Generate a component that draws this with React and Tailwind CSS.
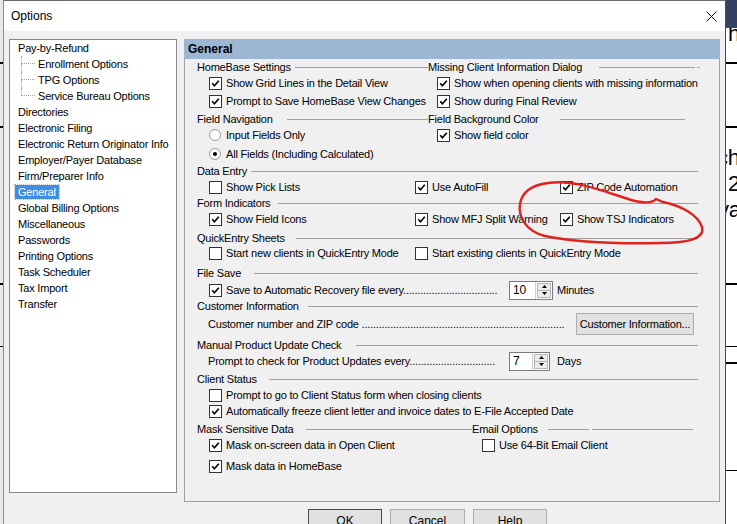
import React from 'react';

const Check = ({ on }) => (
  <span className="flex h-[13px] w-[13px] shrink-0 items-center justify-center border border-[#333] bg-white">
    {on && (
      <svg width="9" height="9" viewBox="0 0 9 9">
        <path d="M1.2 4.3 L3.4 6.7 L7.8 1.8" fill="none" stroke="#000" strokeWidth="1.7" />
      </svg>
    )}
  </span>
);

const CheckItem = ({ on, children }) => (
  <div className="flex items-center gap-[4px] whitespace-nowrap">
    <Check on={on} />
    <span>{children}</span>
  </div>
);

const Radio = ({ on, children }) => (
  <div className="flex items-center gap-[5px] whitespace-nowrap">
    <span className="flex h-[12px] w-[12px] shrink-0 items-center justify-center rounded-full border border-[#9a9a9a] bg-white">
      {on && <span className="h-[4px] w-[4px] rounded-full bg-black" />}
    </span>
    <span>{children}</span>
  </div>
);

const Rule = ({ className = '' }) => <div className={`h-px bg-[#a0a0a0] ${className}`} />;

const Row = ({ className = '', children }) => (
  <div className={`flex h-[14px] shrink-0 items-center whitespace-nowrap ${className}`}>{children}</div>
);

const Spin = ({ value, w }) => (
  <div className={`flex h-[19px] shrink-0 border border-[#7a7a7a] bg-white ${w}`}>
    <span className="flex-1 pl-[3px] text-[12px] leading-[17px]">{value}</span>
    <div className="flex w-[17px] flex-col border-l border-[#d0d0d0] p-px">
      <div className="flex flex-1 items-center justify-center border border-[#b5b5b5] bg-[#ececec]">
        <svg width="5" height="3" viewBox="0 0 5 3"><path d="M2.5 0 L5 3 L0 3Z" fill="#000" /></svg>
      </div>
      <div className="flex flex-1 items-center justify-center border border-t-0 border-[#b5b5b5] bg-[#ececec]">
        <svg width="5" height="3" viewBox="0 0 5 3"><path d="M0 0 L5 0 L2.5 3Z" fill="#000" /></svg>
      </div>
    </div>
  </div>
);

// label followed by a run of leader dots, in a box of fixed width
const Dotted = ({ text, dots, w }) => (
  <span className={`block shrink-0 whitespace-nowrap ${w}`}>
    {text}
    {'.'.repeat(dots)}
  </span>
);

const treeTop = [
  'Directories',
  'Electronic Filing',
  'Electronic Return Originator Info',
  'Employer/Payer Database',
  'Firm/Preparer Info',
  'General',
  'Global Billing Options',
  'Miscellaneous',
  'Passwords',
  'Printing Options',
  'Task Scheduler',
  'Tax Import',
  'Transfer',
];

const children = ['Enrollment Options', 'TPG Options', 'Service Bureau Options'];

const Tree = () => (
  <div className="h-[454px] w-[168px] shrink-0 border border-[#828790] bg-white">
    <div className="flex h-[16px] items-center pl-[5px]">
      <span className="px-[3px]">Pay-by-Refund</span>
    </div>
    {children.map((c, i) => (
      <div key={c} className="flex h-[16px] items-center pl-[11px]">
        <div className="flex h-[16px] w-[14px] flex-col">
          <div className="h-[8px] border-b border-l border-dotted border-[#a0a0a0]" />
          <div className={`h-[8px] ${i < children.length - 1 ? 'border-l border-dotted border-[#a0a0a0]' : ''}`} />
        </div>
        <span className="px-[3px]">{c}</span>
      </div>
    ))}
    {treeTop.map((t) => (
      <div key={t} className="flex h-[16px] items-center pl-[5px]">
        {t === 'General' ? (
          <span className="bg-[#3d8ee5] px-[3px] leading-[14px] text-white outline-1 outline-dotted outline-[#9cc3ef]">{t}</span>
        ) : (
          <span className="px-[3px]">{t}</span>
        )}
      </div>
    ))}
  </div>
);

const Panel = () => (
  <div className="flex h-[463px] w-[536px] shrink-0 flex-col">
    <div className="flex h-[20px] shrink-0 items-center bg-[#9db6d3] pl-[4px] text-[12px] font-bold tracking-normal">
      General
    </div>
    <div className="flex flex-1 flex-col border border-t-0 border-[#a0a0a0] pl-[12px]">
      {/* HomeBase / Missing client */}
      <Row className="mt-[1px]">
        <div className="flex w-[231px] items-center">
          <span className="w-[98px]">HomeBase Settings</span>
          <Rule className="flex-1" />
        </div>
        <span className="w-[171px]">Missing Client Information Dialog</span>
        <Rule className="w-[96px]" />
        <Rule className="ml-[2px] w-[3px]" />
      </Row>
      <Row className="mt-[2px] pl-[12px]">
        <div className="w-[228px]"><CheckItem on>Show Grid Lines in the Detail View</CheckItem></div>
        <CheckItem on>Show when opening clients with missing information</CheckItem>
      </Row>
      <Row className="mt-[4px] pl-[12px]">
        <div className="w-[228px]"><CheckItem on>Prompt to Save HomeBase View Changes</CheckItem></div>
        <CheckItem on>Show during Final Review</CheckItem>
      </Row>

      {/* Field navigation / background */}
      <Row className="mt-[4px]">
        <div className="flex w-[231px] items-center">
          <span className="w-[90px]">Field Navigation</span>
          <Rule className="flex-1" />
        </div>
        <span className="w-[132px]">Field Background Color</span>
        <Rule className="w-[125px]" />
      </Row>
      <Row className="mt-[2px] pl-[12px]">
        <div className="w-[228px]"><Radio>Input Fields Only</Radio></div>
        <CheckItem on>Show field color</CheckItem>
      </Row>
      <Row className="mt-[5px] pl-[12px]">
        <Radio on>All Fields (Including Calculated)</Radio>
      </Row>

      {/* Data entry */}
      <Row className="mr-[21px] mt-[3px]">
        <span className="w-[54px]">Data Entry</span>
        <Rule className="flex-1" />
      </Row>
      <Row className="mt-[2px] pl-[12px]">
        <div className="w-[206px]"><CheckItem>Show Pick Lists</CheckItem></div>
        <div className="w-[145px]"><CheckItem on>Use AutoFill</CheckItem></div>
        <CheckItem on>ZIP Code Automation</CheckItem>
      </Row>

      {/* Form indicators */}
      <Row className="mr-[21px] mt-[2px]">
        <span className="w-[81px]">Form Indicators</span>
        <Rule className="flex-1" />
      </Row>
      <Row className="mt-[2px] pl-[12px]">
        <div className="w-[206px]"><CheckItem on>Show Field Icons</CheckItem></div>
        <div className="w-[145px]"><CheckItem on>Show MFJ Split Warning</CheckItem></div>
        <CheckItem on>Show TSJ Indicators</CheckItem>
      </Row>

      {/* QuickEntry */}
      <Row className="mr-[21px] mt-[5px]">
        <span className="w-[99px]">QuickEntry Sheets</span>
        <Rule className="flex-1" />
      </Row>
      <Row className="mt-[1px] pl-[12px]">
        <div className="w-[206px]"><CheckItem>Start new clients in QuickEntry Mode</CheckItem></div>
        <CheckItem>Start existing clients in QuickEntry Mode</CheckItem>
      </Row>

      {/* File save */}
      <Row className="mr-[21px] mt-[6px]">
        <span className="w-[57px]">File Save</span>
        <Rule className="flex-1" />
      </Row>
      <Row className="mt-[3px] pl-[12px]">
        <Check on />
        <span className="ml-[4px]"><Dotted text="Save to Automatic Recovery file every" dots={33} w="w-[276px]" /></span>
        <div className="ml-[7px]"><Spin value="10" w="w-[44px]" /></div>
        <span className="ml-[4px]">Minutes</span>
      </Row>

      {/* Customer info */}
      <Row className="mr-[21px] mt-[2px]">
        <span className="w-[111px]">Customer Information</span>
        <Rule className="flex-1" />
      </Row>
      <Row className="mt-[4px] pl-[11px]">
        <Dotted text="Customer number and ZIP code " dots={71} w="w-[362px]" />
        <button className="ml-[6px] h-[22px] w-[118px] shrink-0 border border-[#adadad] bg-[#e1e1e1] text-center">
          Customer Information...
        </button>
      </Row>

      {/* Manual product update */}
      <Row className="mr-[21px] mt-[7px]">
        <span className="w-[159px]">Manual Product Update Check</span>
        <Rule className="flex-1" />
      </Row>
      <Row className="mt-[2px] pl-[11px]">
        <Dotted text="Prompt to check for Product Updates every" dots={30} w="w-[294px]" />
        <div className="ml-[7px]"><Spin value="7" w="w-[41px]" /></div>
        <span className="ml-[7px]">Days</span>
      </Row>

      {/* Client status */}
      <Row className="mr-[21px] mt-[4px]">
        <span className="w-[72px]">Client Status</span>
        <Rule className="flex-1" />
      </Row>
      <Row className="mt-[2px] pl-[12px]">
        <CheckItem>Prompt to go to Client Status form when closing clients</CheckItem>
      </Row>
      <Row className="mt-[2px] pl-[12px]">
        <CheckItem on>Automatically freeze client letter and invoice dates to E-File Accepted Date</CheckItem>
      </Row>

      {/* Mask / Email */}
      <Row className="mt-[4px]">
        <div className="flex w-[275px] items-center">
          <span className="w-[109px]">Mask Sensitive Data</span>
          <Rule className="flex-1" />
        </div>
        <span className="w-[76px]">Email Options</span>
        <Rule className="w-[41px]" />
        <Rule className="ml-[3px] w-[101px]" />
      </Row>
      <Row className="mt-[2px] pl-[12px]">
        <div className="w-[273px]"><CheckItem on>Mask on-screen data in Open Client</CheckItem></div>
        <CheckItem>Use 64-Bit Email Client</CheckItem>
      </Row>
      <Row className="mt-[7px] pl-[12px]">
        <CheckItem on>Mask data in HomeBase</CheckItem>
      </Row>
    </div>
  </div>
);

const Backdrop = () => (
  <div className="flex w-[11px] shrink-0 flex-col overflow-hidden bg-white text-[22px] leading-[26px] text-black">
    <div className="h-[28px] shrink-0 bg-[#34425f]" />
    <div className="h-[34px] shrink-0 overflow-hidden">
      <span className="-mt-[6px] ml-[2px] block leading-[24px]">h</span>
    </div>
    <div className="h-[2px] shrink-0 bg-black" />
    <div className="h-[62px] shrink-0" />
    <div className="h-[2px] shrink-0 bg-black" />
    <div className="h-[155px] shrink-0 whitespace-nowrap pt-[17px]">
      <div className="-ml-[9px]">ch</div>
      <div className="ml-[2px]">2</div>
      <div className="-ml-[8px]">va</div>
    </div>
    <div className="h-[2px] shrink-0 bg-black" />
    <div className="h-[61px] shrink-0" />
    <div className="h-px shrink-0 bg-black" />
    <div className="h-[15px] shrink-0" />
    <div className="h-[2px] shrink-0 bg-black" />
    <div className="h-[106px] shrink-0" />
    <div className="h-px shrink-0 bg-black" />
  </div>
);

const LeftEdge = () => (
  <div className="flex w-[3px] shrink-0 flex-col bg-[#e9e9e9]">
    <div className="h-[62px] shrink-0" />
    <div className="h-[2px] shrink-0 bg-black" />
    <div className="h-[62px] shrink-0" />
    <div className="h-[2px] shrink-0 bg-black" />
    <div className="h-[155px] shrink-0" />
    <div className="h-[2px] shrink-0 bg-black" />
    <div className="h-[61px] shrink-0" />
    <div className="h-px shrink-0 bg-black" />
  </div>
);

export default function App() {
  return (
    <div className="relative flex h-[524px] w-[737px] overflow-hidden font-['Liberation_Sans',Arial,sans-serif] text-[11px] tracking-[-0.2px] text-black">
      <LeftEdge />
      <div className="flex w-[723px] shrink-0 flex-col border border-b-0 border-l-[#8a8a8a] border-r-[#4a4a4a] border-t-[#6a6a6a] bg-[#f0f0f0]">
        <div className="flex h-[30px] shrink-0 items-center justify-between bg-white pl-[7px] pr-[8px]">
          <span className="text-[12px] tracking-normal">Options</span>
          <svg width="11" height="11" viewBox="0 0 11 11">
            <path d="M0.5 0.5 L10.5 10.5 M10.5 0.5 L0.5 10.5" stroke="#111" strokeWidth="1" />
          </svg>
        </div>
        <div className="flex shrink-0 gap-[7px] pl-[5px] pt-[8px]">
          <Tree />
          <Panel />
        </div>
        <div className="flex gap-[8px] pl-[304px] pt-[7px]">
          <button className="h-[23px] w-[74px] border border-[#4a4a4a] bg-[#e1e1e1] text-[12px] tracking-normal">OK</button>
          <button className="h-[23px] w-[75px] border border-[#adadad] bg-[#e1e1e1] text-[12px] tracking-normal">Cancel</button>
          <button className="h-[23px] w-[74px] border border-[#adadad] bg-[#e1e1e1] text-[12px] tracking-normal">Help</button>
        </div>
      </div>
      <Backdrop />
      <svg className="pointer-events-none absolute inset-0" width="737" height="524" viewBox="0 0 737 524">
        <path
          d="M548 183 C572 179 600 190 628 199 C643 204 653 203 656 199 L663 202 C682 206 698 215 702 227 C705 238 690 243 660 243 C620 244 575 242 545 236 C525 231 518 216 520 204 C522 192 532 185 548 183"
          fill="none"
          stroke="#e0231e"
          strokeWidth="2.4"
          strokeLinecap="round"
        />
      </svg>
    </div>
  );
}
